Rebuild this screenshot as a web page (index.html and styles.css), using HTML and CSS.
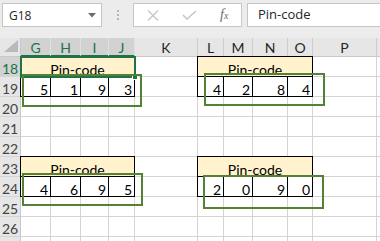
FILE: index.html
```html
<!DOCTYPE html>
<html lang="en">
<head>
  <meta charset="UTF-8" />
  <meta name="viewport" content="width=device-width, initial-scale=1.0"/>
  <title>Pin-code sheet</title>
  <link rel="stylesheet" href="styles.css">
</head>
<body>

  <div class="formula-bar">
    <div class="name-box">
      <span>G18</span>
      <svg width="8" height="5" viewBox="0 0 8 5"><path d="M0 0H8L4 4.5Z" fill="#6d6d6d"/></svg>
    </div>
    <div class="grip"><span></span><span></span><span></span></div>
    <div class="fx-box">
      <svg width="12" height="11" viewBox="0 0 12 11"><path d="M1 0.5L11 10.5M11 0.5L1 10.5" stroke="#c6c6c6" stroke-width="1.3"/></svg>
      <svg width="15" height="10" viewBox="0 0 15 10"><path d="M1 5L5 9L14 1" stroke="#c6c6c6" stroke-width="1.6" fill="none"/></svg>
      <span class="fx">f<i>x</i></span>
    </div>
    <div class="formula-input">Pin-code</div>
  </div>

  <div class="sheet" id="sheet"></div>

  <script>
    const cols = ["G", "H", "I", "J", "K", "L", "M", "N", "O", "P", ""];
    const rows = [18, 19, 20, 21, 22, 23, 24, 25, 26];

    // each table: title row + one row of digits, 4 columns wide
    const tables = [
      { row: 18, col: 0, pin: [5, 1, 9, 3] },
      { row: 18, col: 5, pin: [4, 2, 8, 4] },
      { row: 23, col: 0, pin: [4, 6, 9, 5] },
      { row: 23, col: 5, pin: [2, 0, 9, 0] }
    ];

    // green frames drawn over the sheet (left, top, width, height)
    const frames = [
      [22, 36, 120, 33],
      [204, 35, 121, 33],
      [22, 135, 121, 33],
      [203, 137, 121, 34]
    ];

    function build() {
      let html = `<div class="corner"><svg width="14" height="12" viewBox="0 0 14 12"><path d="M14 0V12H0Z" fill="#b9b9b9"/></svg></div>`;

      cols.forEach((name, c) => {
        html += `<div class="col-head${c <= 3 ? " sel" : ""}">${name}</div>`;
      });

      rows.forEach(r => {
        html += `<div class="row-head${r === 18 ? " sel" : ""}">${r}</div>`;
        for (let c = 0; c < cols.length; c++) {
          const title = tables.find(t => t.row === r && t.col === c);
          const line = tables.find(t => t.row + 1 === r && c >= t.col && c < t.col + 4);
          if (title) {
            html += `<div class="cell tb title">Pin-code</div>`;
            c += 3;
          } else if (line) {
            html += `<div class="cell tb num">${line.pin[c - line.col]}</div>`;
          } else {
            html += `<div class="cell"></div>`;
          }
        }
      });

      // top sliver of the next row, cut by the window edge
      html += `<div class="row-head"></div>` + `<div class="cell"></div>`.repeat(cols.length);

      html += `<div class="selection"><span class="handle"></span></div>`;
      frames.forEach(([x, y, w, h]) => {
        html += `<div class="frame" style="left:${x}px;top:${y}px;width:${w}px;height:${h}px"></div>`;
      });

      document.getElementById("sheet").innerHTML = html;
    }

    build();
  </script>

</body>
</html>
```

FILE: styles.css
```css
body {
  margin: 0;
  width: 380px;
  height: 241px;
  overflow: hidden;
  background: #fff;
  font-family: Lato, "Open Sans", sans-serif;
  color: #000;
}
.formula-bar {
  display: flex;
  align-items: flex-start;
  height: 38px;
  box-sizing: border-box;
  padding-top: 3px;
  background: #ececec;
  font-family: "Open Sans", sans-serif;
}
.name-box {
  display: flex;
  align-items: center;
  justify-content: space-between;
  width: 100px;
  height: 24px;
  box-sizing: border-box;
  margin-left: 2px;
  padding: 0 5px 0 6px;
  background: #fff;
  border: 1px solid #c6c6c6;
  font-size: 12px;
  color: #262626;
}
.grip {
  display: flex;
  flex-direction: column;
  align-items: center;
  gap: 2px;
  width: 31px;
  padding-top: 7px;
}
.grip span {
  width: 2px;
  height: 2px;
  background: #b4b4b4;
}
.fx-box {
  display: flex;
  align-items: center;
  gap: 23px;
  width: 109px;
  height: 24px;
  box-sizing: border-box;
  padding-left: 13px;
  background: #fff;
  border: 1px solid #c6c6c6;
}
.fx {
  font-family: "Liberation Serif", serif;
  font-style: italic;
  font-size: 14px;
  color: #6b6b6b;
}
.fx i {
  font-size: 10px;
}
.formula-input {
  flex: 1;
  height: 24px;
  box-sizing: border-box;
  margin: 0 -2px 0 5px;
  padding-left: 10px;
  background: #fff;
  border: 1px solid #c6c6c6;
  font-size: 13px;
  line-height: 21px;
  color: #262626;
}
.sheet {
  position: relative;
  display: grid;
  grid-template-columns: 21px 30px 30px 28px 26px 63px 26px 29px 35px 25px 64px 1fr;
  grid-template-rows: 19px repeat(10, 20px);
  font-size: 14px;
}
.corner {
  display: flex;
  justify-content: flex-end;
  align-items: flex-end;
  padding: 0 2px 4px 0;
  background: #e6e6e6;
  border-right: 1px solid #c8c8c8;
  border-bottom: 1px solid #c8c8c8;
}
.col-head {
  box-sizing: border-box;
  padding-top: 2px;
  line-height: 15px;
  text-align: center;
  background: #e6e6e6;
  color: #262626;
  border-right: 1px solid #cdcdcd;
  border-bottom: 1px solid #c8c8c8;
}
.col-head.sel {
  background: #d2d2d2;
  color: #217346;
  border-right-color: #e0e0e0;
  border-bottom: 2px solid #217346;
}
.row-head {
  box-sizing: border-box;
  padding-top: 4px;
  line-height: 15px;
  text-align: center;
  background: #e6e6e6;
  color: #444;
  border-right: 1px solid #c8c8c8;
  border-bottom: 1px solid #d4d4d4;
}
.row-head.sel {
  background: #d2d2d2;
  color: #217346;
}
.cell {
  box-sizing: border-box;
  padding: 4px 2px 0 2px;
  line-height: 15px;
  border-right: 1px solid #d4d4d4;
  border-bottom: 1px solid #d4d4d4;
}
.cell.tb {
  margin: -1px 0 0 -1px;
  padding-top: 5px;
  border: 1px solid #000;
}
.title {
  grid-column: span 4;
  text-align: center;
  background: #fff2cc;
}
.num {
  text-align: right;
}
.selection {
  position: absolute;
  left: 20px;
  top: 18px;
  width: 116px;
  height: 22px;
  box-sizing: border-box;
  border: 2px solid #217346;
}
.handle {
  position: absolute;
  right: -4px;
  bottom: -4px;
  width: 6px;
  height: 6px;
  box-sizing: border-box;
  background: #217346;
  border: 1px solid #fff;
}
.frame {
  position: absolute;
  box-sizing: border-box;
  border: 2px solid #548235;
}
```
